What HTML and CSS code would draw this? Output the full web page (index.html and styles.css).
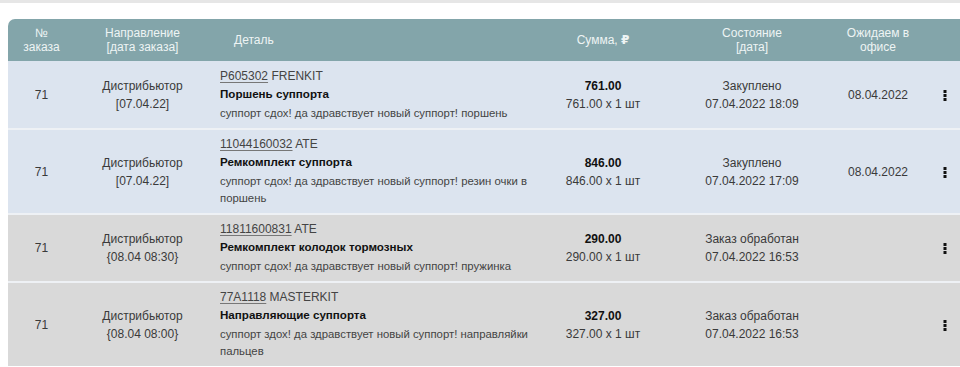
FILE: index.html
```html
<!DOCTYPE html>
<html lang="ru">
<head>
<meta charset="utf-8">
<link rel="stylesheet" href="styles.css">
</head>
<body>
<div class="topbar"></div>
<div class="wrap">
<table class="orders">
  <colgroup>
    <col class="c-num"><col class="c-dir"><col class="c-det"><col class="c-sum"><col class="c-st"><col class="c-exp"><col class="c-act">
  </colgroup>
  <thead>
    <tr>
      <th class="th-first">№<br>заказа</th>
      <th>Направление<br>[дата заказа]</th>
      <th class="th-det">Деталь</th>
      <th>Сумма, <span class="rub">₽</span></th>
      <th>Состояние<br>[дата]</th>
      <th>Ожидаем в<br>офисе</th>
      <th class="th-last"></th>
    </tr>
  </thead>
  <tbody>
    <tr class="blue">
      <td class="num">71</td>
      <td class="dir">Дистрибьютор<br>[07.04.22]</td>
      <td class="det"><div class="code"><span class="art">P605302</span> FRENKIT</div><div class="title">Поршень суппорта</div><div class="desc">суппорт сдох! да здравствует новый суппорт! поршень</div></td>
      <td class="sum"><b>761.00</b><br>761.00 x 1 шт</td>
      <td class="st">Закуплено<br>07.04.2022 18:09</td>
      <td class="exp">08.04.2022</td>
      <td class="act"><svg class="dots" width="4" height="11" viewBox="0 0 4 11"><rect x="0.5" y="0" width="3" height="3"/><rect x="0.5" y="4" width="3" height="3"/><rect x="0.5" y="8" width="3" height="3"/></svg></td>
    </tr>
    <tr class="blue">
      <td class="num">71</td>
      <td class="dir">Дистрибьютор<br>[07.04.22]</td>
      <td class="det"><div class="code"><span class="art">11044160032</span> ATE</div><div class="title">Ремкомплект суппорта</div><div class="desc">суппорт сдох! да здравствует новый суппорт! резин очки в поршень</div></td>
      <td class="sum"><b>846.00</b><br>846.00 x 1 шт</td>
      <td class="st">Закуплено<br>07.04.2022 17:09</td>
      <td class="exp">08.04.2022</td>
      <td class="act"><svg class="dots" width="4" height="11" viewBox="0 0 4 11"><rect x="0.5" y="0" width="3" height="3"/><rect x="0.5" y="4" width="3" height="3"/><rect x="0.5" y="8" width="3" height="3"/></svg></td>
    </tr>
    <tr class="gray">
      <td class="num">71</td>
      <td class="dir">Дистрибьютор<br>{08.04 08:30}</td>
      <td class="det"><div class="code"><span class="art">11811600831</span> ATE</div><div class="title">Ремкомплект колодок тормозных</div><div class="desc">суппорт сдох! да здравствует новый суппорт! пружинка</div></td>
      <td class="sum"><b>290.00</b><br>290.00 x 1 шт</td>
      <td class="st">Заказ обработан<br>07.04.2022 16:53</td>
      <td class="exp"></td>
      <td class="act"><svg class="dots" width="4" height="11" viewBox="0 0 4 11"><rect x="0.5" y="0" width="3" height="3"/><rect x="0.5" y="4" width="3" height="3"/><rect x="0.5" y="8" width="3" height="3"/></svg></td>
    </tr>
    <tr class="gray">
      <td class="num">71</td>
      <td class="dir">Дистрибьютор<br>{08.04 08:00}</td>
      <td class="det"><div class="code"><span class="art">77A1118</span> MASTERKIT</div><div class="title">Направляющие суппорта</div><div class="desc">суппорт здох! да здравствует новый суппорт! направляйки пальцев</div></td>
      <td class="sum"><b>327.00</b><br>327.00 x 1 шт</td>
      <td class="st">Заказ обработан<br>07.04.2022 16:53</td>
      <td class="exp"></td>
      <td class="act"><svg class="dots" width="4" height="11" viewBox="0 0 4 11"><rect x="0.5" y="0" width="3" height="3"/><rect x="0.5" y="4" width="3" height="3"/><rect x="0.5" y="8" width="3" height="3"/></svg></td>
    </tr>
  </tbody>
</table>
</div>
</body>
</html>
```
FILE: styles.css
```css
html, body {
  margin: 0;
  padding: 0;
  background: #ffffff;
  overflow: hidden;
}
body {
  font-family: "Liberation Sans", Arial, sans-serif;
  font-size: 12px;
  color: #3a3a3a;
}
.topbar {
  height: 3px;
  background: #e6e6e6;
}
.wrap {
  padding: 16px 0 0 8px;
}
.orders {
  width: 952px;
  table-layout: fixed;
  border-collapse: separate;
  border-spacing: 0;
}
.c-num { width: 67px; }
.c-dir { width: 135px; }
.c-det { width: 333px; }
.c-sum { width: 120px; }
.c-st { width: 178px; }
.c-exp { width: 74px; }
.c-act { width: 45px; }

.orders th {
  background: #83a5aa;
  color: #eef4f4;
  font-weight: normal;
  font-size: 12px;
  line-height: 14px;
  height: 28px;
  padding: 7px 0;
  text-align: center;
  vertical-align: middle;
}
.orders th.th-first { border-top-left-radius: 7px; }
.orders th.th-det { text-align: left; padding-left: 24px; }
.rub { font-weight: bold; font-family: "DejaVu Sans", sans-serif; font-size: 12px; }

.orders td {
  vertical-align: middle;
  text-align: center;
  line-height: 18px;
  padding: 0;
}
.orders tbody tr + tr td { border-top: 2px solid #eef1f5; }
.orders tr.blue td { background: #dce4ef; }
.orders tr.gray td { background: #d9d9d9; }

.orders td.det {
  text-align: left;
  padding: 6px 0 6px 10px;
}
.orders tbody tr:first-child td.det { padding-top: 7px; }
.code { line-height: 17px; height: 17px; color: #444; }
.art { text-decoration: underline; text-decoration-color: #777; text-underline-offset: 2px; }
.title { line-height: 17px; height: 17px; font-weight: bold; font-size: 11.6px; color: #111; }
.desc { margin-top: 3px; line-height: 17px; font-size: 11.35px; color: #444; padding-right: 10px; }
.sum b { color: #111; }
.act { text-align: right !important; }
.dots { fill: #111; display: inline-block; vertical-align: middle; margin-right: 13px; }
```
